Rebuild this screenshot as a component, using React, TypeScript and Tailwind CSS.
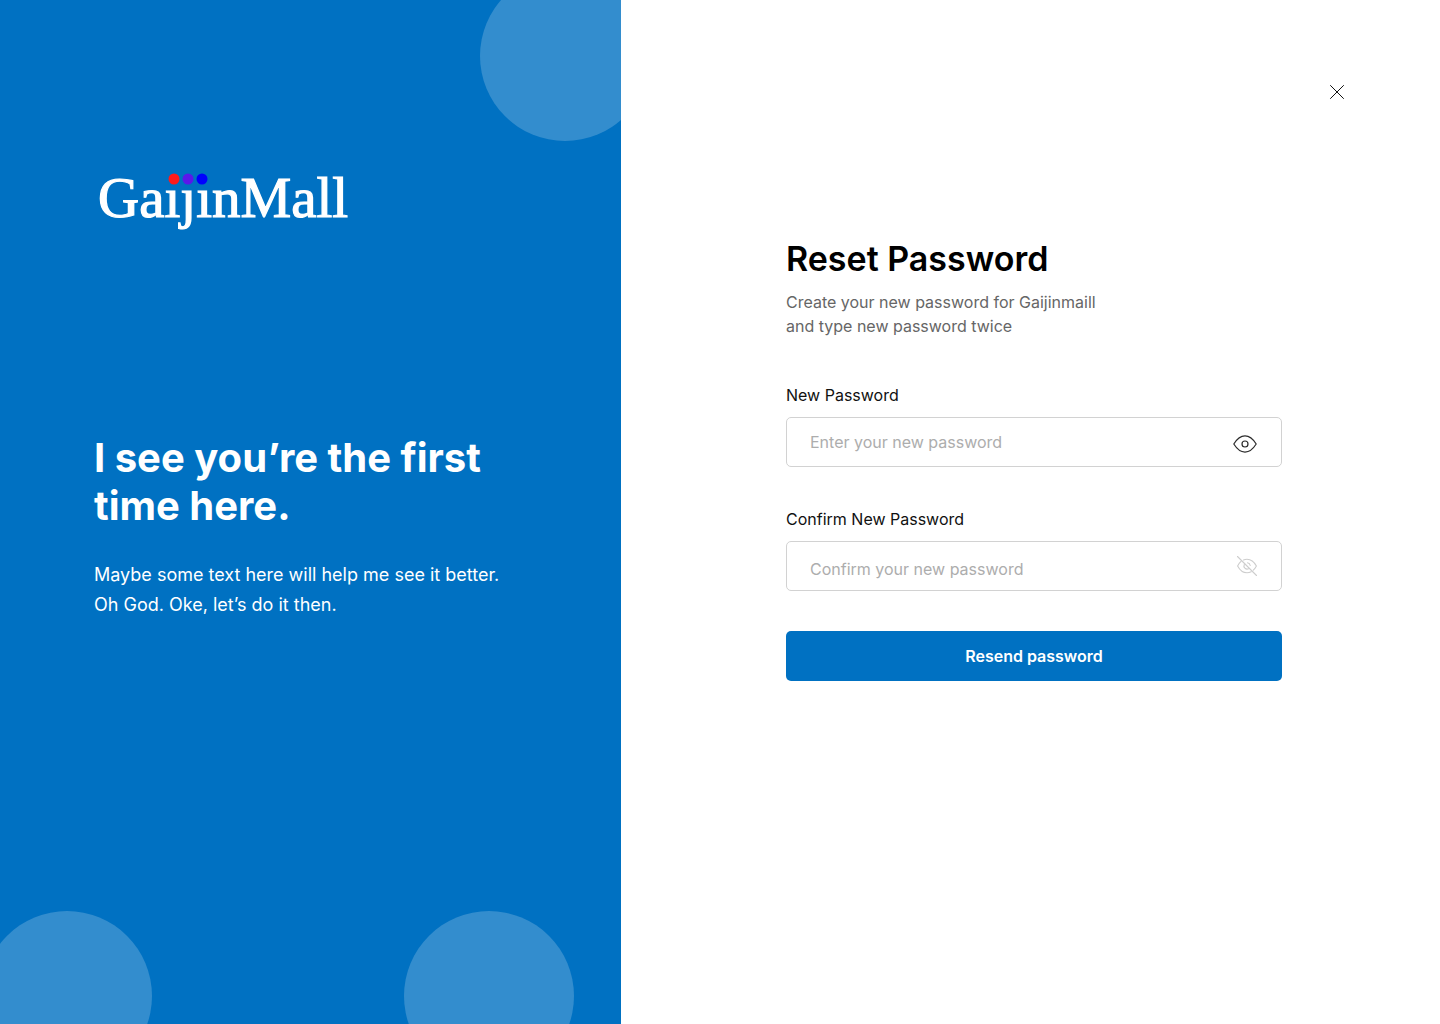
import React, { useState } from "react";

function Logo() {
  return (
    <svg className="h-[72px] w-64 overflow-visible" viewBox="0 0 256 72" role="img" aria-label="GaijinMall">
      <text
        x="4"
        y="49"
        fill="#fff"
        stroke="#fff"
        strokeWidth="1.2"
        fontSize="57"
        fontFamily='"Liberation Serif", serif'
      >
        GaıȷınMall
      </text>
      <circle cx="80" cy="11" r="5.5" fill="#ff1a1a" />
      <circle cx="94" cy="11" r="5.5" fill="#5b17ea" />
      <circle cx="108" cy="11" r="5.5" fill="#0000ff" />
    </svg>
  );
}

function EyeIcon() {
  return (
    <svg className="size-6" viewBox="0 0 24 24" fill="none" stroke="#2b2b2b" strokeWidth="1.2">
      <path d="M.8 12C4.2 6.600 7.800 3.900 12 3.900S19.800 6.600 23.200 12C19.800 17.400 16.200 20.100 12 20.100S4.200 17.400.800 12Z" strokeLinejoin="round" />
      <circle cx="12" cy="12" r="3" />
    </svg>
  );
}

function EyeOffIcon() {
  return (
    <svg className="size-5" viewBox="0 0 20 20" fill="none" stroke="#cdcdcd" strokeWidth="1.1" strokeLinecap="round">
      <path d="M.5.500 19.500 19.500" />
      <path d="M6.500 3.900C7.600 3.400 8.800 3.200 10 3.200c4 0 7 2.300 9.400 6.800-.9 1.700-1.900 3.100-3.100 4.200" />
      <path d="M4 5.400C2.700 6.500 1.500 8.100.6 10 3 14.500 6 16.800 10 16.800c1.500 0 2.900-.4 4.200-1.100" />
      <path d="M10.500 6.800A3.200 3.200 0 0 1 13.200 9.500M7.300 8.400A3.200 3.200 0 0 0 11.600 12.700" />
    </svg>
  );
}

type PasswordFieldProps = {
  id: string;
  label: string;
  placeholder: string;
  inputClass: string;
  toggleClass: string;
  icon: React.ReactNode;
};

function PasswordField({ id, label, placeholder, inputClass, toggleClass, icon }: PasswordFieldProps) {
  const [visible, setVisible] = useState(false);
  return (
    <div>
      <label htmlFor={id} className="block text-base text-[#111]">
        {label}
      </label>
      <div className="mt-2.5 flex h-[50px] items-center rounded-[5px] border border-[#d2d2d2] bg-white">
        <input
          id={id}
          type={visible ? "text" : "password"}
          placeholder={placeholder}
          className={`h-full min-w-0 flex-1 bg-transparent pl-[23px] text-base text-[#111] outline-none placeholder:text-[#adadad] ${inputClass}`}
        />
        <button
          type="button"
          aria-label={`Show or hide ${label.toLowerCase()}`}
          onClick={() => setVisible(!visible)}
          className={toggleClass}
        >
          {icon}
        </button>
      </div>
    </div>
  );
}

export default function App() {
  return (
    <div className="grid min-h-screen grid-cols-[621fr_819fr] bg-white font-['Inter',sans-serif]">
      <aside className="relative overflow-hidden bg-[#0071c2] px-[94px] pt-[168px] text-white">
        <span className="absolute -top-[29px] -right-[29px] size-[170px] rounded-full bg-white/20" />
        <span className="absolute -bottom-[57px] -left-[18px] size-[170px] rounded-full bg-white/20" />
        <span className="absolute right-[47px] -bottom-[57px] size-[170px] rounded-full bg-white/20" />
        <div className="relative">
          <Logo />
          <h2 className="mt-[194px] text-[40px] leading-[48px] font-bold">
            I see you’re the first
            <br />
            time here.
          </h2>
          <p className="mt-[30px] text-lg leading-[30px]">
            Maybe some text here will help me see it better.
            <br />
            Oh God. Oke, let’s do it then.
          </p>
        </div>
      </aside>

      <main className="flex flex-col pt-20">
        <button type="button" aria-label="Close" className="mr-[91px] self-end">
          <svg className="size-6" viewBox="0 0 24 24" fill="none" stroke="#111" strokeWidth="1">
            <path d="M5.500 5.500 18.500 18.500M18.500 5.500 5.500 18.500" strokeLinecap="round" />
          </svg>
        </button>
        <form
          onSubmit={(event) => event.preventDefault()}
          className="mt-[133px] mr-[158px] ml-[165px]"
        >
          <h1 className="text-[34px] leading-[44px] font-semibold text-black">Reset Password</h1>
          <p className="mt-[9px] text-base text-[#666]">
            Create your new password for Gaijinmaill
            <br />
            and type new password twice
          </p>
          <div className="mt-[45px] flex flex-col gap-10">
            <PasswordField
              id="new-password"
              label="New Password"
              placeholder="Enter your new password"
              inputClass=""
              toggleClass="mt-1 mr-6"
              icon={<EyeIcon />}
            />
            <PasswordField
              id="confirm-password"
              label="Confirm New Password"
              placeholder="Confirm your new password"
              inputClass="pt-1.5"
              toggleClass="mr-6"
              icon={<EyeOffIcon />}
            />
            <button
              type="submit"
              className="h-[50px] rounded-[5px] bg-[#0071c2] text-base font-semibold text-white"
            >
              Resend password
            </button>
          </div>
        </form>
      </main>
    </div>
  );
}
